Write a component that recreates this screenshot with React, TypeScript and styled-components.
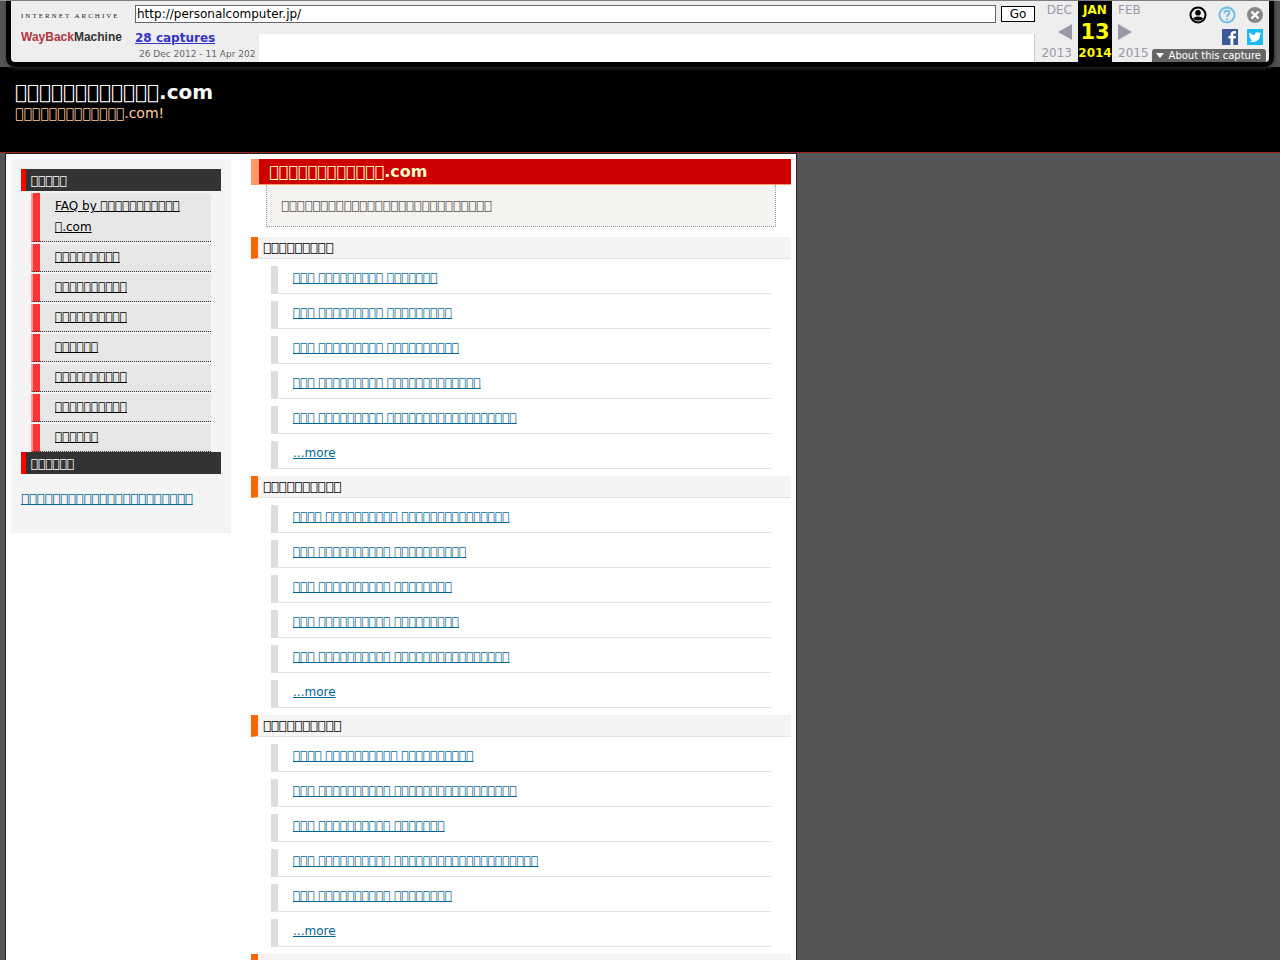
import React from "react";
import styled, { createGlobalStyle } from "styled-components";

const GlobalStyle = createGlobalStyle`
  body { margin: 0; background: #555; color: #555; font-family: "DejaVu Sans", sans-serif; font-size: 14px; line-height: 21px; }
  *, *::before { box-sizing: border-box; }
  h1, h2, h3, p, ul { margin: 0; padding: 0; }
  ul { list-style: none; }
`;

/* Code point without a glyph: shown as an empty box, breaks like an ideograph */
const box = (n: number) => "\u{2FFF0}".repeat(n);

const Toolbar = styled.div`
  position: relative;
  padding: 0 6px;
  border-top: 1px solid #999;
`;
const ToolbarFrame = styled.div`
  height: 66px;
  padding: 0 5px 5px;
  background: #000;
  border-radius: 0 0 9px 9px;
  box-shadow: 1px 1px 4px #333;
`;
const ToolbarBody = styled.div`
  position: relative;
  display: flex;
  height: 61px;
  overflow: hidden;
  background: #eee;
  border-radius: 0 0 4px 4px;
`;
const Logo = styled.a`
  flex: none;
  width: 124px;
  padding: 10px 0 0 10px;
  svg { display: block; }
`;
const Center = styled.div`
  flex: 1;
  min-width: 0;
`;
const UrlForm = styled.form`
  display: flex;
  gap: 5px;
  padding-top: 4px;
`;
const UrlInput = styled.input`
  flex: 1;
  min-width: 0;
  height: 18px;
  padding: 0 1px;
  border: 1px solid #666;
  background: #fff;
  color: #000;
  font: 12px "DejaVu Sans", sans-serif;
`;
const GoButton = styled.button`
  width: 34px;
  height: 16px;
  margin-top: 1px;
  padding: 0;
  border: 1px solid #000;
  background: #fff;
  color: #000;
  font: 12px/14px "DejaVu Sans", sans-serif;
`;
const CaptureRow = styled.div`
  display: flex;
  height: 39px;
`;
const Captures = styled.div`
  flex: none;
  width: 124px;
  padding-top: 7px;
  white-space: nowrap;
  line-height: 16px;
  a { display: block; color: #33c; font-size: 12px; font-weight: bold; }
`;
const Range = styled.span`
  display: block;
  padding-left: 4px;
  color: #666;
  font-size: 9px;
`;
const Sparkline = styled.div`
  flex: 1;
  margin-top: 11px;
  background: #fff;
  border-right: 1px solid #ccc;
`;
const Calendar = styled.div`
  display: grid;
  grid-template-columns: 38px 34px 41px;
  margin-left: 5px;
  line-height: 16px;
  font-size: 12px;
`;
const CalCol = styled.div<{ $side: "prev" | "now" | "next" }>`
  display: grid;
  grid-template-rows: 18px 26px 16px;
  height: 61px;
  white-space: nowrap;
  padding: ${(p) => (p.$side === "prev" ? "0 6px 0 0" : p.$side === "next" ? "0 0 0 6px" : "0")};
  justify-items: ${(p) => (p.$side === "prev" ? "end" : p.$side === "next" ? "start" : "center")};
  align-items: center;
  background: ${(p) => (p.$side === "now" ? "#000" : "transparent")};
  color: ${(p) => (p.$side === "now" ? "#ff0" : "#99a")};
  font-weight: ${(p) => (p.$side === "now" ? "bold" : "normal")};
  strong { font-size: 21px; }
  svg { display: block; }
`;
const Tools = styled.div`
  width: 116px;
  padding: 3px 6px 0 0;
`;
const ToolRow = styled.div<{ $gap: number }>`
  display: flex;
  justify-content: flex-end;
  align-items: center;
  gap: ${(p) => p.$gap}px;
  height: 22px;
  a, svg { display: block; }
`;
const About = styled.button`
  position: absolute;
  right: 3px;
  bottom: 0;
  display: flex;
  align-items: center;
  gap: 5px;
  height: 13px;
  padding: 0 5px 0 4px;
  border: 0;
  border-radius: 3px 3px 0 0;
  background: #666;
  color: #fff;
  font: 10px/13px "DejaVu Sans", sans-serif;
`;
const Header = styled.header`
  height: 86px;
  padding: 14px 15px 0;
  background: #000;
  border-bottom: 1px solid #922;
`;
const SiteTitle = styled.h1`
  color: #fff;
  font-size: 20px;
  line-height: 23px;
`;
const Tagline = styled.p`
  color: #fc9;
  line-height: 18px;
`;
const Wrapper = styled.div`
  display: flex;
  align-items: flex-start;
  gap: 20px;
  width: 792px;
  max-width: 100%;
  margin-left: 5px;
  padding: 5px;
  background: #fff;
  border: 1px solid #222;
  border-bottom: 0;
`;
const Sidebar = styled.aside`
  flex: none;
  width: 220px;
  padding: 10px 10px 24px;
  background: #f4f4f4;
`;
const SideHeading = styled.h2`
  height: 22px;
  padding: 1px 5px 0;
  border-left: 5px solid #f00;
  background: #333;
  color: #fff;
  font-size: 12px;
  font-weight: normal;
  line-height: 22px;
`;
const Menu = styled.ul`
  padding: 0 10px;
`;
const MenuItem = styled.li`
  margin-top: 2px;
  padding: 3px 27px 3px 22px;
  border: solid #f99;
  border-width: 0 0 1px 2px;
  border-bottom: 1px dotted #222;
  background: linear-gradient(to right, #f33 7px, #e7e7e7 7px);
  font-size: 12px;
  a { color: #000; }
`;
const SideNote = styled.p`
  padding-top: 14px;
  font-size: 13px;
`;
const Link = styled.a`
  color: #069;
`;
const Main = styled.main`
  flex: 1;
  min-width: 0;
`;
const MainTitle = styled.h2`
  height: 26px;
  padding-left: 10px;
  border-left: 8px solid #f96;
  border-bottom: 1px solid #f96;
  background: #c00;
  color: #ffc;
  font-size: 16px;
  line-height: 25px;
`;
const Intro = styled.p`
  margin: 0 15px 10px;
  padding: 10px 14px;
  border: 1px dotted #999;
  border-top: 0;
  background: #f5f3f0;
  font-size: 13px;
`;
const SectionTitle = styled.h3`
  height: 22px;
  padding-left: 5px;
  border-left: 7px solid #f60;
  border-bottom: 1px solid #e4e4e4;
  background: #f4f4f4;
  color: #000;
  font-size: 13px;
  font-weight: normal;
  line-height: 21px;
`;
const Posts = styled.ul`
  padding: 7px 20px;
  display: grid;
  gap: 7px;
`;
const Post = styled.li`
  height: 28px;
  padding-left: 15px;
  border-left: 7px solid #ddd;
  border-bottom: 1px solid #e4e4e4;
  font-size: 12px;
  line-height: 25px;
`;

const menu = [9, 10, 10, 6, 10, 10, 6];
const sections: { title: number; posts: number[][] }[] = [
  { title: 9, posts: [[3, 9, 7], [3, 9, 9], [3, 9, 10], [3, 9, 13], [3, 9, 18]] },
  { title: 10, posts: [[4, 10, 15], [3, 10, 10], [3, 10, 8], [3, 10, 9], [3, 10, 16]] },
  { title: 10, posts: [[4, 10, 10], [3, 10, 17], [3, 10, 7], [3, 10, 20], [3, 10, 8]] },
  { title: 6, posts: [] },
];

function WaybackLogo() {
  return (
    <svg width="104" height="42" viewBox="0 0 104 42" aria-label="Internet Archive Wayback Machine">
      <text x="0" y="7" fontFamily="Liberation Serif" fontSize="7" fill="#222" letterSpacing="2">INTERNET ARCHIVE</text>
      <text x="0" y="30" fontFamily="Liberation Sans" fontWeight="bold" fontSize="12" fill="#b4343c">
        WayBack<tspan fill="#333">Machine</tspan>
      </text>
    </svg>
  );
}

export default function App() {
  return (
    <>
      <GlobalStyle />
      <Toolbar>
        <ToolbarFrame>
          <ToolbarBody>
            <Logo href="#"><WaybackLogo /></Logo>
            <Center>
              <UrlForm>
                <UrlInput aria-label="URL" defaultValue="http://personalcomputer.jp/" />
                <GoButton type="button">Go</GoButton>
              </UrlForm>
              <CaptureRow>
                <Captures>
                  <a href="#">28 captures</a>
                  <Range>26 Dec 2012 - 11 Apr 202</Range>
                </Captures>
                <Sparkline />
              </CaptureRow>
            </Center>
            <Calendar>
              <CalCol $side="prev">
                <span>DEC</span>
                <svg width="14" height="16"><path d="M14 0V16L0 8Z" fill="#99a" /></svg>
                <span>2013</span>
              </CalCol>
              <CalCol $side="now"><span>JAN</span><strong>13</strong><span>2014</span></CalCol>
              <CalCol $side="next">
                <span>FEB</span>
                <svg width="14" height="16"><path d="M0 0V16L14 8Z" fill="#99a" /></svg>
                <span>2015</span>
              </CalCol>
            </Calendar>
            <Tools>
              <ToolRow $gap={11}>
                <a href="#" aria-label="Sign in">
                  <svg width="18" height="18" viewBox="0 0 18 18">
                    <circle cx="9" cy="9" r="7.500" fill="none" stroke="#000" strokeWidth="2" />
                    <circle cx="9" cy="6.800" r="2.800" />
                    <path d="M4 13C4 9.500 14 9.500 14 13Q9 16 4 13Z" />
                  </svg>
                </a>
                <a href="#" aria-label="Help">
                  <svg width="18" height="18" viewBox="0 0 18 18" fill="none" stroke="#6bbcf0" strokeWidth="2">
                    <circle cx="9" cy="9" r="7.500" />
                    <path d="M6.500 7.200C6.500 3.800 11.800 4 11.500 7C11.300 8.800 9 8.600 9 11M9 12.300V14" />
                  </svg>
                </a>
                <a href="#" aria-label="Close">
                  <svg width="16" height="16" viewBox="0 0 16 16">
                    <circle cx="8" cy="8" r="8" fill="#888" />
                    <path d="M4.500 4.500L11.500 11.500M11.500 4.500L4.500 11.500" stroke="#fff" strokeWidth="2.400" />
                  </svg>
                </a>
              </ToolRow>
              <ToolRow $gap={9}>
                <a href="#" aria-label="Facebook">
                  <svg width="16" height="16" viewBox="0 0 16 16">
                    <path fill="#3b5998" d="M0 0H16V16H0Z" />
                    <path fill="#fff" d="M8.500 16V9.500H6.500V7H8.500V5.500C8.500 3.200 10 2 12 2H14V4.500H12.500C11.600 4.500 11.300 5 11.300 5.700V7H14L13.600 9.500H11.300V16Z" />
                  </svg>
                </a>
                <a href="#" aria-label="Twitter">
                  <svg width="16" height="16" viewBox="0 0 16 16">
                    <path fill="#1dbcf0" d="M0 0H16V16H0Z" />
                    <path fill="#fff" d="M2.500 3.500C4 5.200 5.700 6 7.800 6C7.400 3.500 10.500 2.200 12 4L14 3.300L13 5L14.200 4.800L13 6.200C13 11 8.500 14.500 2 12.200C3.500 12.200 4.600 12 5.500 11.200C4.300 11 3.500 10.400 3.200 9.300H4.200C3 8.800 2.300 7.900 2.300 6.700L3.300 7C2.200 6 1.900 4.800 2.500 3.500Z" />
                  </svg>
                </a>
              </ToolRow>
            </Tools>
            <About type="button">
              <svg width="8" height="6"><path d="M0 0H8L4 5Z" fill="#fff" /></svg>
              About this capture
            </About>
          </ToolbarBody>
        </ToolbarFrame>
      </Toolbar>
      <Header>
        <SiteTitle>{box(12)}.com</SiteTitle>
        <Tagline>{box(13)}.com!</Tagline>
      </Header>
      <Wrapper>
        <Sidebar>
          <SideHeading>{box(5)}</SideHeading>
          <Menu>
            <MenuItem><a href="#">FAQ by {box(12)}.com</a></MenuItem>
            {menu.map((n, i) => <MenuItem key={i}><a href="#">{box(n)}</a></MenuItem>)}
          </Menu>
          <SideHeading>{box(6)}</SideHeading>
          <SideNote><Link href="#">{box(22)}</Link></SideNote>
        </Sidebar>
        <Main>
          <MainTitle>{box(12)}.com</MainTitle>
          <Intro>{box(27)}</Intro>
          {sections.map((s, i) => (
            <section key={i}>
              <SectionTitle>{box(s.title)}</SectionTitle>
              {s.posts.length > 0 && (
                <Posts>
                  {s.posts.map((p, j) => <Post key={j}><Link href="#">{p.map(box).join(" ")}</Link></Post>)}
                  <Post><Link href="#">...more</Link></Post>
                </Posts>
              )}
            </section>
          ))}
        </Main>
      </Wrapper>
    </>
  );
}
